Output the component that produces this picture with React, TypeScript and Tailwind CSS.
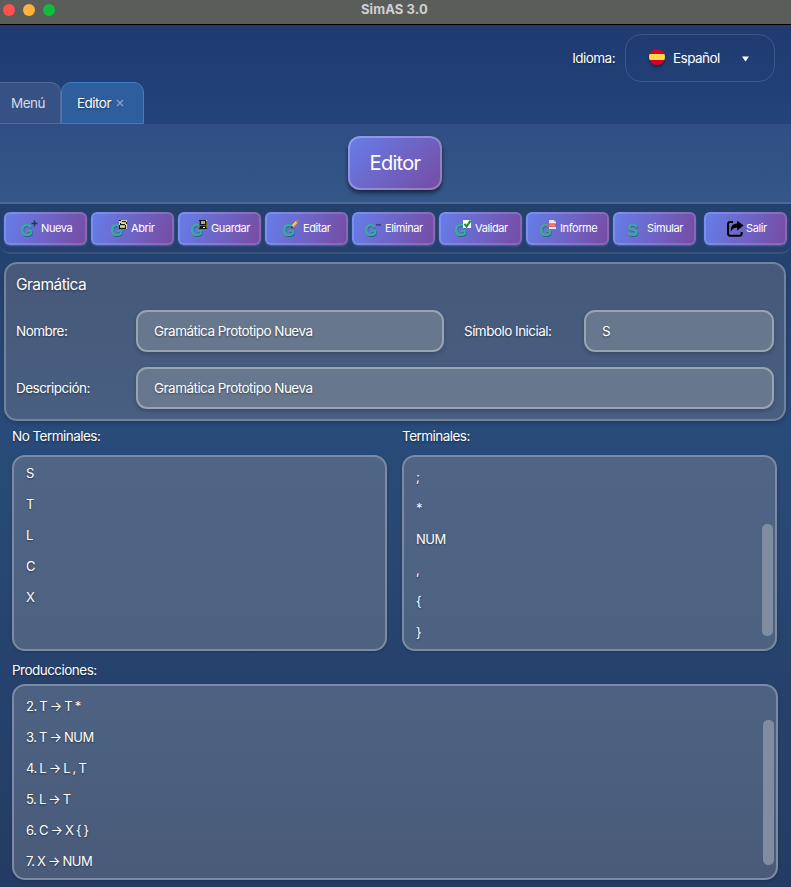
import type { ReactNode } from 'react';

const shadow = '[text-shadow:0_1px_2px_rgba(0,0,0,0.45)]';

function Overlay({ kind }: { kind: string }) {
  switch (kind) {
    case 'plus':
      return <path d="M13.5 0.5v6M10.5 3.5h6" stroke="#173f5c" strokeWidth="1.5" fill="none" />;
    case 'open':
      return (
        <g shapeRendering="crispEdges">
          <path d="M8 0h8v9H8z" fill="#d9d2b0" />
          <path d="M8 0h2v1H8zM11 1h4v1h-4zM9 3h1v1H9zM15 2h1v2h-1zM9 4h5v1H9zM8 5h1v4H8zM9 8h6v1H9zM14 5h1v3h-1z" fill="#161609" />
          <path d="M9 5h5v1H9zM9 7h5v1H9z" fill="#c9b336" />
        </g>
      );
    case 'save':
      return (
        <g shapeRendering="crispEdges">
          <path d="M8 0h8v9H8z" fill="#14140a" />
          <path d="M10 1h4v3h-4z" fill="#a9a9a4" />
          <path d="M8 1h1v7H8zM15 1h1v7h-1zM9 5h6v1H9z" fill="#6f6818" />
          <path d="M12 7h2v1h-2zM15 0h1v1h-1z" fill="#efeee5" />
        </g>
      );
    case 'edit':
      return (
        <g>
          <path d="M9.5 6.5L14 1.6" stroke="#f4b42e" strokeWidth="2.6" />
          <path d="M9.2 5.6L13 1.8" stroke="#ffe9a0" strokeWidth="0.9" />
          <path d="M13.6 2l1.6-1.6" stroke="#d4665b" strokeWidth="2.4" />
          <path d="M8.2 7.8l1.2-1.3" stroke="#39291c" strokeWidth="1.4" />
        </g>
      );
    case 'minus':
      return <path d="M11 4.8h5" stroke="#3d4687" strokeWidth="1.8" />;
    case 'check':
      return (
        <g>
          <path d="M8 0h8v8H8z" fill="#fff" />
          <path d="M9.4 3.8l2.2 2.7L15.6.6" fill="none" stroke="#129332" strokeWidth="2" />
        </g>
      );
    case 'report':
      return (
        <g>
          <path d="M9 0h5l2 2v7H9z" fill="#eee9ed" />
          <path d="M14 0l2 2h-2z" fill="#aab" />
          <path d="M8 3.4h8v3.4H8z" fill="#dc4a49" />
          <path d="M9.4 5.1h5.4" stroke="#fbd4d0" strokeWidth="1" strokeDasharray="1.4 .6" />
        </g>
      );
    default:
      return null;
  }
}

function GIcon({ kind, letter = 'G' }: { kind: string; letter?: string }) {
  const x = letter === 'S' ? 0.5 : -0.4;
  return (
    <svg width="17" height="18" viewBox="0 0 17 18" className="shrink-0 overflow-visible">
      <text x={x + 0.4} y="16.5" fontSize="16" fontWeight="700" fontFamily="Liberation Sans, sans-serif" fill="#2f6384">
        {letter}
      </text>
      <text x={x} y="16" fontSize="16" fontWeight="700" fontFamily="Liberation Sans, sans-serif" fill="#3ba8a2" stroke="#3ba8a2" strokeWidth="0.2">
        {letter}
      </text>
      <Overlay kind={kind} />
    </svg>
  );
}

function ExitIcon() {
  return (
    <svg width="17" height="18" viewBox="0 0 17 18" className="shrink-0 overflow-visible" fill="none">
      <path d="M7 1.9H4.2Q2.1 1.9 2.1 3.9V13.6Q2.1 15.8 4.2 15.8H13.6Q15.7 15.8 15.7 13.6V12" stroke="#000" strokeWidth="2" />
      <path d="M11.2 0.7L17.6 5.6 11.2 10.6V7.8C8 7.6 6.2 8.8 4.9 11.8 4.2 6.6 6.4 3.6 11.2 3.4Z" fill="#000" />
    </svg>
  );
}

function ToolButton({ label, icon, pad, className = '' }: { label: string; icon: ReactNode; pad: string; className?: string }) {
  return (
    <button
      className={`flex h-[33px] w-[83px] shrink-0 items-center gap-[3px] rounded-[6px] border-2 border-white/15 bg-[linear-gradient(105deg,#667eea,#764ba2)] bg-origin-border text-[11px] tracking-[-0.4px] text-white shadow-[0_1px_2px_rgba(102,126,234,0.55)] ${pad} ${className}`}
    >
      {icon}
      <span className="whitespace-nowrap">{label}</span>
    </button>
  );
}

function Field({ value, className }: { value: string; className: string }) {
  return (
    <div className={`flex h-[42px] items-center rounded-[11px] border-2 border-[#98a3b4] bg-[#67778d] pl-4 pt-px shadow-[0_2px_4px_rgba(0,0,0,0.22)] ${shadow} ${className}`}>
      {value}
    </div>
  );
}

function ListPanel({ rows, className, thumb }: { rows: string[]; className: string; thumb?: string }) {
  return (
    <div className={`flex h-[196px] justify-between overflow-hidden rounded-[13px] border-2 border-[#7c8ba3] shadow-[0_1px_3px_rgba(0,0,0,0.2)] ${className}`}>
      <ul className="pl-3 text-[13px] tracking-[-0.45px] [word-spacing:-0.7px]">
        {rows.map((row) => (
          <li key={row} className={`flex h-[31px] items-center whitespace-pre ${shadow}`}>
            {row}
          </li>
        ))}
      </ul>
      {thumb && <div className={`w-[11px] rounded-[5px] bg-[#808da1] ${thumb}`} />}
    </div>
  );
}

export default function App() {
  return (
    <div className="flex h-[887px] w-[791px] flex-col overflow-hidden bg-[linear-gradient(#1f3b70_25px,#23437b_123px,#24426f_255px,#294b79_430px,#284873_550px,#26426d_665px,#243c63_887px)] font-['Inter','Noto_Sans',sans-serif] text-[13.5px] tracking-[-0.53px] text-white">
      <div className="flex h-[25px] shrink-0 items-center justify-center border-b border-black bg-[#5b5d5b] pb-[5px]">
        <div className="flex w-[361px] gap-2 pl-[3px]">
          <span className="size-3 rounded-full bg-[#ff524f]" />
          <span className="size-3 rounded-full bg-[#ffb23c]" />
          <span className="size-3 rounded-full bg-[#10bd3b]" />
        </div>
        <h1 className="flex-1 text-[13px] font-bold leading-none tracking-[0.1px] text-[#d0d1d0]">SimAS 3.0</h1>
      </div>

      <header className="flex h-[57px] shrink-0 items-end justify-end pr-4">
        <span className={`mb-[14px] mr-[10px] leading-5 ${shadow}`}>Idioma:</span>
        <div className="flex h-12 w-[150px] items-center rounded-[16px] border border-[#3e5788] pl-[23px]">
          <span className="mb-0.5 size-4 rounded-full bg-[linear-gradient(#d5002b_0_31%,#ffda44_31%_69%,#d5002b_69%)] shadow-[0_2px_3px_rgba(0,0,0,0.4)]" />
          <span className="ml-2 mt-px w-[69px]">Español</span>
          <svg width="7" height="6" viewBox="0 0 7 6" className="mt-px">
            <path d="M0 0.5h7L3.5 5.5z" fill="#fff" />
          </svg>
        </div>
      </header>

      <nav className="flex h-[42px] shrink-0">
        <div className="flex w-[61px] items-center rounded-tr-[10px] border border-l-0 border-[#526a93] bg-[#365284] pl-[11px] text-[#d3dae6]">Menú</div>
        <div className="flex w-[83px] items-center rounded-t-[10px] border border-[#3e7ec4] bg-[#2e5e9e] pl-[15px]">
          <span className={`w-[35px] ${shadow}`}>Editor</span>
          <svg width="8" height="8" viewBox="0 0 8 8" className="ml-1">
            <path d="M1 1l6 6M7 1l-6 6" stroke="#86a1c8" strokeWidth="1.2" />
          </svg>
        </div>
      </nav>

      <section className="flex h-20 shrink-0 justify-center border-b-2 border-[#4d6a96] bg-[linear-gradient(#304e83,#345789)] pt-3">
        <div className="ml-[-1px] flex h-[54px] w-[94px] items-center justify-center rounded-[12px] border-2 border-white/25 bg-[linear-gradient(135deg,#667eea,#764ba2)] bg-origin-border text-[20px] tracking-[-0.7px] shadow-[0_3px_4px_rgba(0,0,0,0.55)]">
          Editor
        </div>
      </section>

      <section className="flex h-[50px] shrink-0 gap-1 rounded-b-[10px] border-b-2 border-[#3a537e] bg-[#24406c] pl-1 pt-2">
        <ToolButton label="Nueva" icon={<GIcon kind="plus" />} pad="pl-[15px]" />
        <ToolButton label="Abrir" icon={<GIcon kind="open" />} pad="pl-[18px]" />
        <ToolButton label="Guardar" icon={<GIcon kind="save" />} pad="pl-[11px]" />
        <ToolButton label="Editar" icon={<GIcon kind="edit" />} pad="pl-4" />
        <ToolButton label="Eliminar" icon={<GIcon kind="minus" />} pad="pl-[11px]" />
        <ToolButton label="Validar" icon={<GIcon kind="check" />} pad="pl-[14px]" />
        <ToolButton label="Informe" icon={<GIcon kind="report" />} pad="pl-3" />
        <ToolButton label="Simular" icon={<GIcon kind="none" letter="S" />} pad="pl-3" />
        <ToolButton label="Salir" icon={<ExitIcon />} pad="pl-5" className="ml-1" />
      </section>

      <section className="ml-1 mt-2 h-[159px] w-[782px] shrink-0 rounded-[13px] border-2 border-[#72839d] bg-[linear-gradient(#47597a,#475f81)] pl-[10px] pt-[11px] shadow-[0_2px_4px_rgba(0,0,0,0.2)]">
        <h2 className={`h-[35px] text-[15.5px] leading-5 ${shadow}`}>Gramática</h2>
        <div className="flex items-center">
          <label className={`mt-px w-[120px] ${shadow}`}>Nombre:</label>
          <Field value="Gramática Prototipo Nueva" className="w-[308px]" />
          <label className={`ml-5 mt-px w-[120px] ${shadow}`}>Símbolo Inicial:</label>
          <Field value="S" className="w-[190px]" />
        </div>
        <div className="mt-[15px] flex items-center">
          <label className={`mt-px w-[120px] ${shadow}`}>Descripción:</label>
          <Field value="Gramática Prototipo Nueva" className="w-[638px]" />
        </div>
      </section>

      <section className="flex shrink-0 gap-[15px] pl-3 pt-[5px]">
        <div className="w-[375px]">
          <h3 className={`h-[29px] leading-5 ${shadow}`}>No Terminales:</h3>
          <ListPanel rows={['S', 'T', 'L', 'C', 'X']} className="bg-[linear-gradient(#506486,#4d6280)] pt-[1px]" />
        </div>
        <div className="w-[375px]">
          <h3 className={`h-[29px] leading-5 ${shadow}`}>Terminales:</h3>
          <ListPanel rows={[';', '*', 'NUM', ',', '{', '}']} className="bg-[linear-gradient(#506486,#4d6280)] pt-[5px]" thumb="mr-[2px] mt-[62px] h-[112px]" />
        </div>
      </section>

      <section className="shrink-0 pl-3 pt-[9px]">
        <h3 className={`h-6 leading-5 ${shadow}`}>Producciones:</h3>
        <ListPanel
          rows={['2. T → T *', '3. T → NUM', '4. L → L , T', '5. L → T', '6. C → X { }', '7. X → NUM']}
          className="w-[766px] bg-[linear-gradient(#4d6282,#4a5b79)] pt-[5px]"
          thumb="mr-[2px] mt-[29px] h-[145px]"
        />
      </section>
    </div>
  );
}
